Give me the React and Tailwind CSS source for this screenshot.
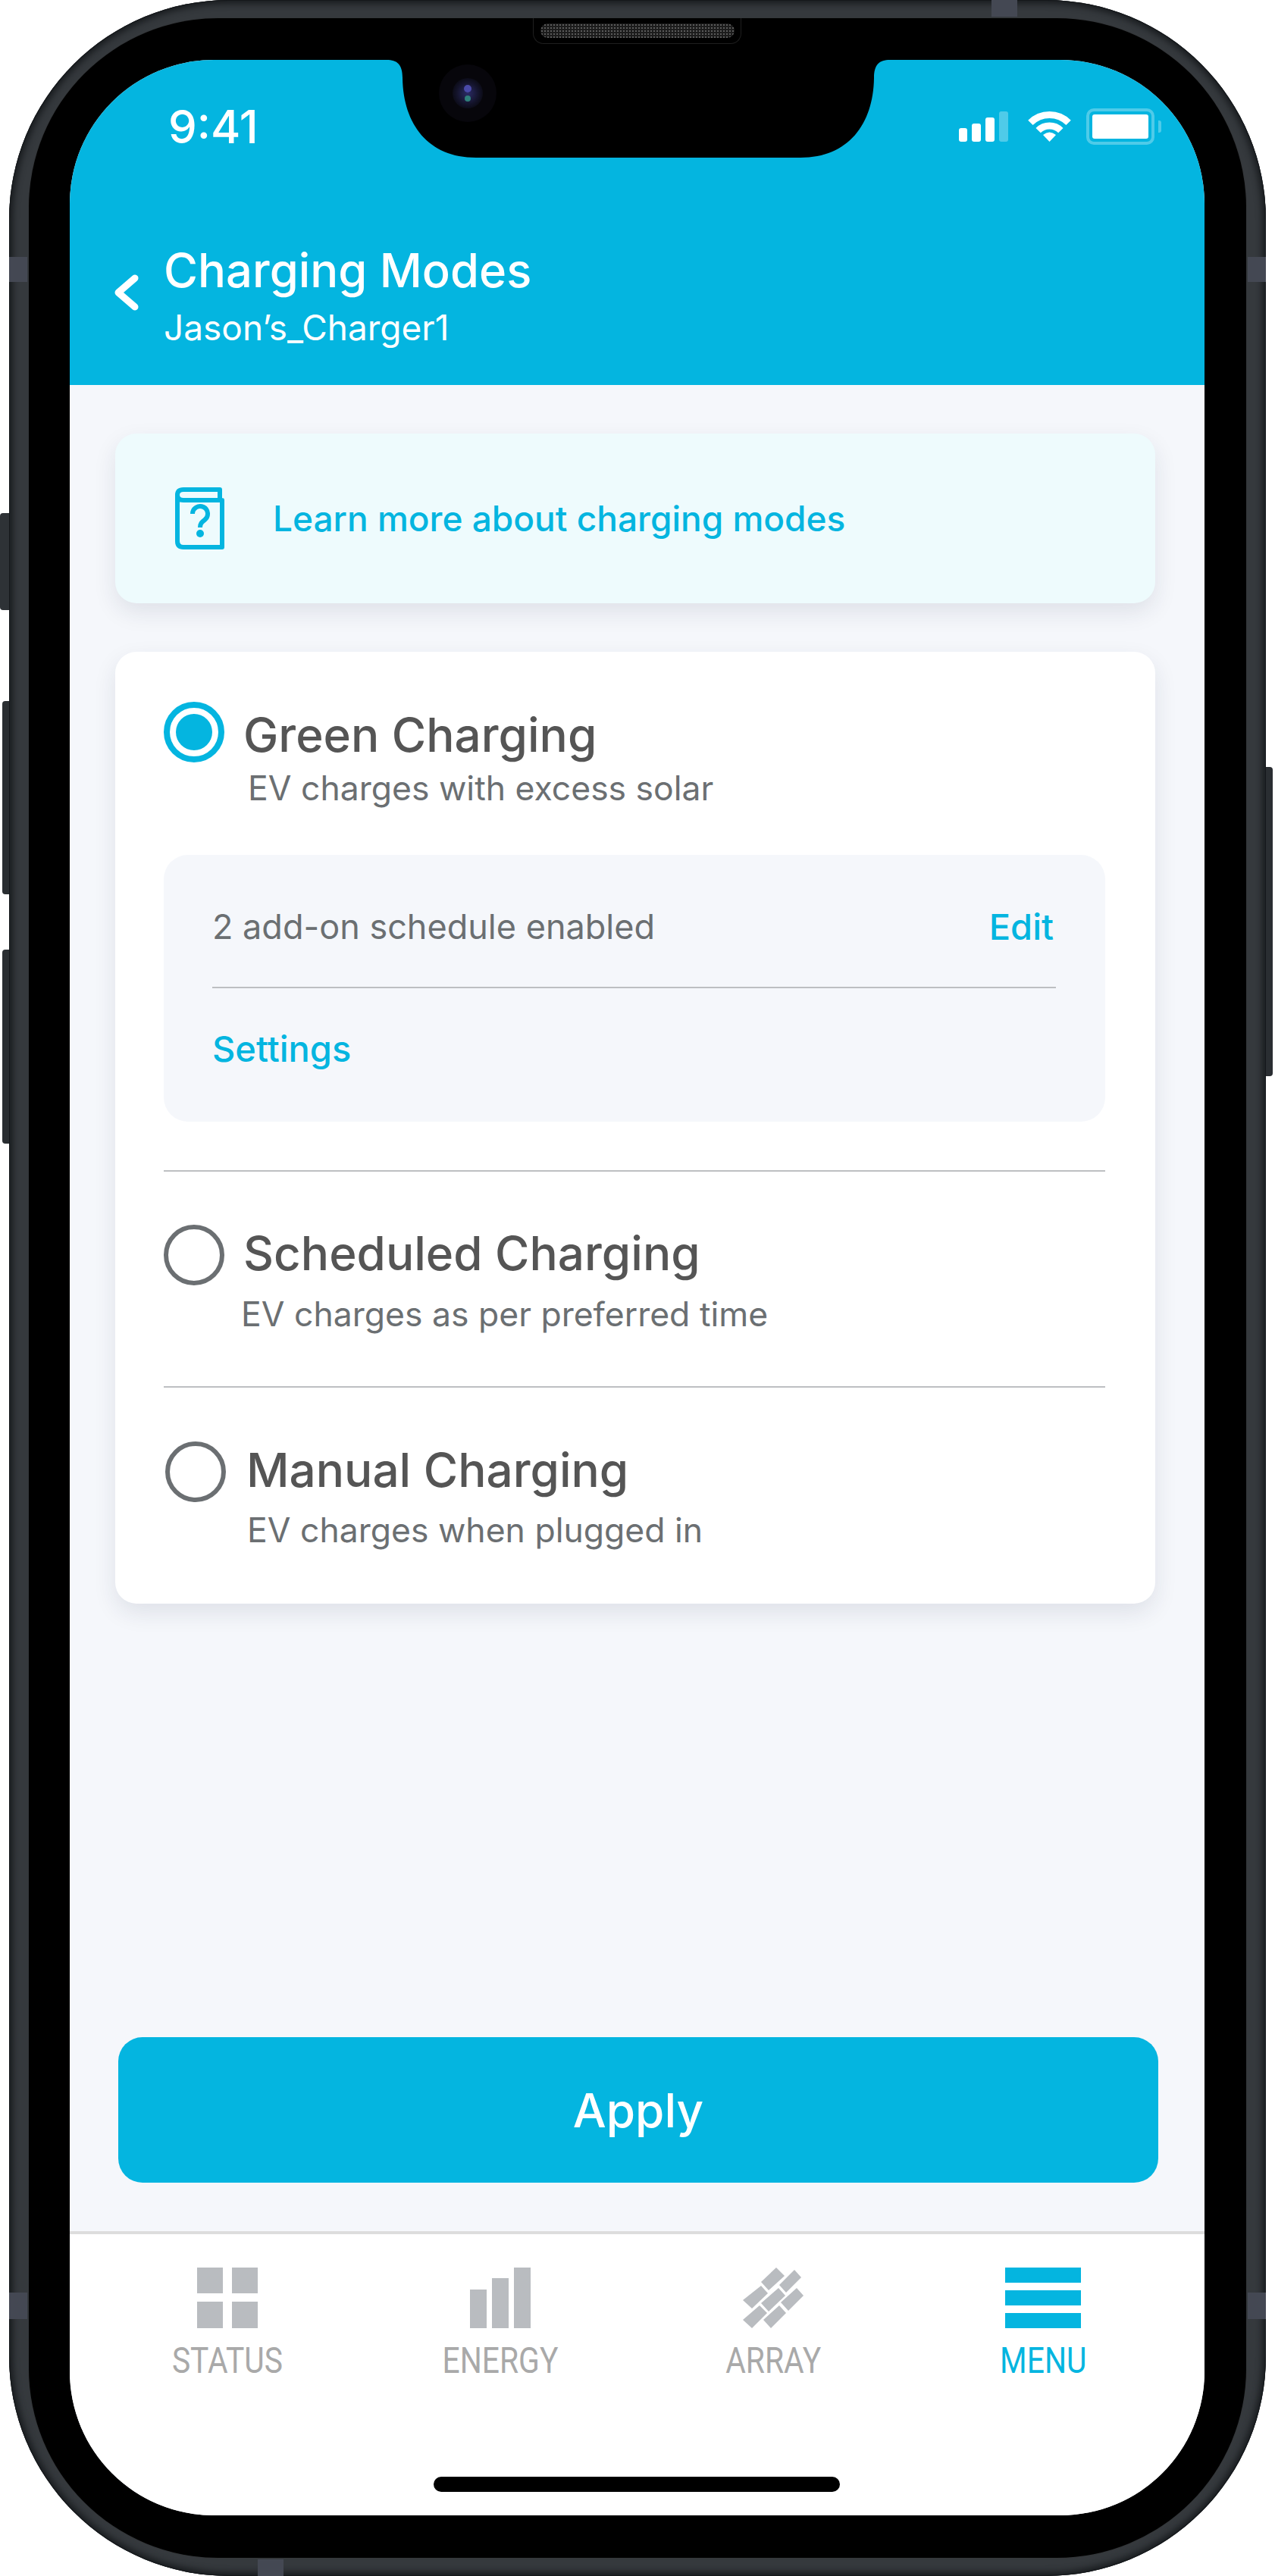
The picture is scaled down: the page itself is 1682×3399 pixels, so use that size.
const Radio = ({ active, className }) => (
  <div
    className={`flex h-[80px] w-[80px] shrink-0 items-center justify-center rounded-full ${
      active ? "border-[8px] border-[#04b5e0]" : "border-[6px] border-[#6b6f72]"
    } ${className || ""}`}
  >
    {active && <div className="h-[48px] w-[48px] rounded-full bg-[#04b5e0]" />}
  </div>
);

const SignalIcon = () => (
  <div className="flex h-[40px] items-end gap-[6px]">
    <div className="h-[18px] w-[11px] rounded-[3px] bg-white" />
    <div className="h-[24px] w-[12px] rounded-[3px] bg-white" />
    <div className="h-[32px] w-[12px] rounded-[3px] bg-white" />
    <div className="h-[40px] w-[12px] rounded-[3px] bg-white/30" />
  </div>
);

const WifiIcon = () => (
  <svg width="57" height="40" viewBox="0 0 57 40" fill="none" className="ml-[26px]">
    <path d="M3.4 14.9A35.5 35.5 0 0 1 53.6 14.9" stroke="white" strokeWidth="9" />
    <path d="M13.65 25.15A21 21 0 0 1 43.35 25.15" stroke="white" strokeWidth="9" />
    <path d="M28.5 40L20 31Q28.5 24 37 31Z" fill="white" />
  </svg>
);

const BatteryIcon = () => (
  <div className="ml-[20px] flex items-center gap-[5px]">
    <div className="h-[48px] w-[90px] rounded-[10px] border-[4px] border-white/30 p-[4px]">
      <div className="h-full w-full rounded-[3px] bg-white" />
    </div>
    <div className="h-[16px] w-[4px] rounded-r-[3px] bg-white/30" />
  </div>
);

const BookIcon = () => (
  <svg width="65" height="82" viewBox="0 0 65 82" fill="none" stroke="#04b5e0" strokeWidth="6">
    <path d="M59 17V3H11Q3 3 3 10V71Q3 79 11 79H62V17H11Q3 17 3 10" strokeLinejoin="round" />
    <path d="M23 35a10 10 0 1 1 16 8c-4 3-6 5-6 10" strokeWidth="6" />
    <circle cx="33" cy="61" r="5" fill="#04b5e0" stroke="none" />
  </svg>
);

const StatusTabIcon = () => (
  <div className="grid h-[80px] w-[80px] grid-cols-[34px_34px] grid-rows-[34px_35px] justify-between content-between">
    <div className="bg-[#b9bcc0]" />
    <div className="bg-[#b9bcc0]" />
    <div className="bg-[#b9bcc0]" />
    <div className="bg-[#b9bcc0]" />
  </div>
);

const EnergyTabIcon = () => (
  <div className="flex h-[80px] w-[80px] items-end justify-between">
    <div className="h-[51px] w-[22px] bg-[#b9bcc0]" />
    <div className="h-[66px] w-[22px] bg-[#b9bcc0]" />
    <div className="h-[80px] w-[22px] bg-[#b9bcc0]" />
  </div>
);

const ArrayTabIcon = () => (
  <svg width="80" height="80" viewBox="0 0 80 80" fill="#b9bcc0">
    <path d="M44 0L55 11L34 30L24 19Z" />
    <path d="M68 3L77 13L57 33L48 23Z" />
    <path d="M24 24L33 34L12 54L0 43Z" />
    <path d="M47 27L56 37L34 58L24 47Z" />
    <path d="M71 27L80 37L60 57L50 46Z" />
    <path d="M22 50L32 60L12 80L0 69Z" />
    <path d="M48 50L57 60L37 80L27 69Z" />
  </svg>
);

const MenuTabIcon = () => (
  <div className="flex h-[80px] w-[100px] flex-col justify-between">
    <div className="h-[20px] bg-[#04b5e0]" />
    <div className="h-[20px] bg-[#04b5e0]" />
    <div className="h-[20px] bg-[#04b5e0]" />
  </div>
);

const Tab = ({ icon, label, active, width }) => (
  <div className={`flex flex-col items-center ${width}`}>
    {icon}
    <span
      className={`mt-[18px] inline-block origin-center scale-x-[0.85] font-['Roboto',sans-serif] text-[48px] leading-[50px] ${
        active ? "text-[#04b5e0]" : "text-[#a9a9a9]"
      }`}
    >
      {label}
    </span>
  </div>
);

const Notch = () => (
  <svg className="absolute left-[418px] top-0" width="664" height="129" viewBox="0 0 664 129">
    <defs>
      <radialGradient id="lens">
        <stop offset="0%" stopColor="#2b2b66" />
        <stop offset="70%" stopColor="#14142c" />
        <stop offset="100%" stopColor="#0c0c18" />
      </radialGradient>
    </defs>
    <path
      d="M0 0C14 0 21 6 21 24C22 85 55 129 118 129L546 129C609 129 642 85 643 24C643 6 650 0 664 0Z"
      fill="#000"
    />
    <circle cx="107" cy="44" r="38" fill="#07060b" />
    <circle cx="107" cy="44" r="20" fill="url(#lens)" />
    <circle cx="107" cy="38" r="5" fill="#4a4aa8" />
    <circle cx="107" cy="51" r="4" fill="#2f7f7a" />
  </svg>
);

const App = () => {
  return (
    <div className="relative h-[3399px] w-[1682px] overflow-hidden bg-white font-['Inter',sans-serif]">
      {/* side buttons */}
      <div className="absolute left-0 top-[677px] h-[128px] w-[16px] rounded-l-[4px] bg-[#2e3236]" />
      <div className="absolute left-[3px] top-[925px] h-[255px] w-[12px] rounded-l-[4px] bg-[#2a2e32]" />
      <div className="absolute left-[3px] top-[1253px] h-[256px] w-[12px] rounded-l-[4px] bg-[#2a2e32]" />
      <div className="absolute left-[1666px] top-[1012px] h-[408px] w-[13px] rounded-r-[4px] bg-[#2a2e32]" />

      <div className="relative ml-[12px] h-[3399px] w-[1658px] rounded-[290px] bg-[#35393d] px-[26px] py-[24px] shadow-[inset_0_0_0_1px_#15181b,inset_0_0_9px_5px_#191c1f]">
        {/* antenna bands */}
        <div className="absolute left-[1296px] top-0 h-[22px] w-[34px] bg-[#444853]" />
        <div className="absolute left-0 top-[339px] h-[33px] w-[24px] bg-[#444853]" />
        <div className="absolute right-0 top-[339px] h-[33px] w-[24px] bg-[#444853]" />
        <div className="absolute left-0 top-[3025px] h-[35px] w-[24px] bg-[#444853]" />
        <div className="absolute right-0 top-[3025px] h-[35px] w-[24px] bg-[#444853]" />
        <div className="absolute left-[328px] top-[3377px] h-[22px] w-[34px] bg-[#444853]" />

        <div className="relative h-full w-full rounded-[250px] bg-black pb-[56px] pl-[54px] pr-[55px] pt-[55px] shadow-[0_0_0_1px_#34373a]">
          {/* speaker */}
          <div className="absolute left-[665px] top-0 flex h-[34px] w-[275px] items-center justify-center rounded-b-[14px] border border-t-0 border-[#1f1f1f]">
            <div className="h-[19px] w-[256px] rounded-full bg-[#1c1c1c] bg-[radial-gradient(#5a5a5a_1px,transparent_1px)] bg-[length:4px_4px]" />
          </div>

          <div className="relative flex h-full w-full flex-col overflow-hidden rounded-[190px] bg-[#f5f7fb]">
            <Notch />

            {/* header */}
            <header className="h-[429px] shrink-0 bg-[#04b5e0] text-white">
              <div className="mt-[64px] flex h-[64px] items-start justify-between pl-[130px] pr-[57px]">
                <span className="text-[60px] font-medium leading-[48px]">9:41</span>
                <div className="flex items-center">
                  <SignalIcon />
                  <WifiIcon />
                  <BatteryIcon />
                </div>
              </div>
              <div className="mt-[114px] flex items-center pl-[58px]">
                <svg width="33" height="48" viewBox="0 0 33 48" fill="none" className="mb-[9px]">
                  <path d="M28 5L6 24L28 43" stroke="white" strokeWidth="9" strokeLinecap="round" strokeLinejoin="round" />
                </svg>
                <div className="ml-[33px]">
                  <div className="text-[61.5px] font-medium leading-[72px]">Charging Modes</div>
                  <div className="mt-[11px] text-[46px] leading-[56px]">Jason’s_Charger1</div>
                </div>
              </div>
            </header>

            {/* content */}
            <main className="flex flex-1 flex-col pb-[64px] pl-[60px] pr-[65px] pt-[64px]">
              <a className="flex h-[224px] items-center rounded-[28px] bg-[#eefbfd] pl-[79px] shadow-[0_12px_30px_rgba(30,40,70,0.1)]">
                <BookIcon />
                <span className="ml-[64px] text-[46px] font-medium text-[#04b5e0]">
                  Learn more about charging modes
                </span>
              </a>

              <section className="mt-[64px] h-[1256px] rounded-[28px] bg-white pl-[64px] pr-[66px] pt-[66px] shadow-[0_12px_30px_rgba(30,40,70,0.1)]">
                <div className="flex h-[80px] items-start">
                  <Radio active />
                  <div className="ml-[25px] mt-[4px] text-[62px] font-medium leading-[80px] text-[#555555]">Green Charging</div>
                </div>
                <div className="ml-[111px] mt-[6px] text-[44.5px] leading-[56px] text-[#6b6f72]">EV charges with excess solar</div>

                <div className="mt-[60px] h-[352px] rounded-[32px] bg-[#f5f7fb] pl-[64px] pr-[65px]">
                  <div className="flex h-[176px] items-center justify-between border-b-2 border-[#bdbfc2] pr-[3px] pt-[16px]">
                    <span className="text-[45px] text-[#6b6f72]">2 add-on schedule enabled</span>
                    <span className="text-[47px] font-medium text-[#04b5e0]">Edit</span>
                  </div>
                  <div className="pt-[48px] text-[47px] font-medium leading-[64px] text-[#04b5e0]">Settings</div>
                </div>

                <div className="mt-[64px] border-t-2 border-[#bdbfc2] pt-[70px]">
                  <div className="flex h-[80px] items-start">
                    <Radio />
                    <div className="ml-[25px] mt-[-2px] text-[62px] font-medium leading-[80px] text-[#555555]">Scheduled Charging</div>
                  </div>
                  <div className="ml-[102px] mb-[-2px] mt-[10px] text-[44.5px] leading-[56px] text-[#6b6f72]">EV charges as per preferred time</div>
                </div>

                <div className="mt-[69px] border-t-2 border-[#bdbfc2] pt-[71px]">
                  <div className="flex h-[80px] items-start">
                    <Radio className="ml-[2px]" />
                    <div className="ml-[27px] mt-[-2px] text-[62px] font-medium leading-[80px] text-[#555555]">Manual Charging</div>
                  </div>
                  <div className="ml-[110px] mt-[9px] text-[44.5px] leading-[56px] text-[#6b6f72]">EV charges when plugged in</div>
                </div>
              </section>

              <button className="ml-[4px] mt-auto h-[192px] w-[1372px] shrink-0 rounded-[32px] bg-[#04b5e0] text-[62px] font-medium text-white">
                Apply
              </button>
            </main>

            {/* tab bar */}
            <footer className="relative h-[375px] shrink-0 border-t-4 border-[#dddddd] bg-white pl-[28px] pt-[44px]">
              <div className="flex">
                <Tab icon={<StatusTabIcon />} label="STATUS" width="w-[360px]" />
                <Tab icon={<EnergyTabIcon />} label="ENERGY" width="w-[360px]" />
                <Tab icon={<ArrayTabIcon />} label="ARRAY" width="w-[360px]" />
                <Tab icon={<MenuTabIcon />} label="MENU" active width="w-[352px]" />
              </div>
              <div className="absolute bottom-[31px] left-[480px] h-[20px] w-[536px] rounded-full bg-black" />
            </footer>
          </div>
        </div>
      </div>
    </div>
  );
};

export default App;
